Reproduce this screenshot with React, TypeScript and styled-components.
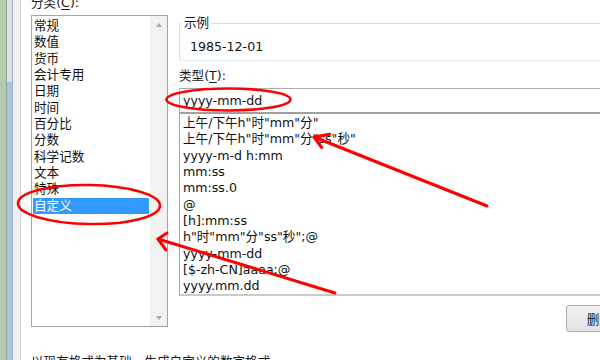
import React from 'react';
import styled, { createGlobalStyle } from 'styled-components';

const GlobalStyle = createGlobalStyle`
  html, body {
    margin: 0;
    padding: 0;
    overflow: hidden;
    background: #fff;
  }
  body {
    font-family: "DejaVu Sans", "Noto Sans CJK SC", sans-serif;
    font-size: 12.6px;
    color: #111;
  }
`;

const categories = ['常规', '数值', '货币', '会计专用', '日期', '时间', '百分比', '分数', '科学记数', '文本', '特殊', '自定义'];

const formats = [
	'上午/下午h"时"mm"分"',
	'上午/下午h"时"mm"分"ss"秒"',
	'yyyy-m-d h:mm',
	'mm:ss',
	'mm:ss.0',
	'@',
	'[h]:mm:ss',
	'h"时"mm"分"ss"秒";@',
	'yyyy-mm-dd',
	'[$-zh-CN]aaaa;@',
	'yyyy.mm.dd',
];

function Annotations() {
	return (
		<Overlay width={600} height={360} viewBox={'0 0 600 360'}>
			<g fill={'none'} stroke={'#f00'} strokeWidth={2.6} strokeLinecap={'round'} strokeLinejoin={'round'}>
				<ellipse cx={228.5} cy={99.5} rx={62} ry={11} />
				<ellipse cx={89} cy={204.5} rx={71} ry={19.5} transform={'rotate(1 89 204.5)'} />
				<path d={'M487 206 L314 137'} strokeWidth={3} />
				<path d={'M329.7 134.2 L314 137 L321.7 147.5'} strokeWidth={3} />
				<path d={'M335 293 L158 239'} strokeWidth={3} />
				<path d={'M167 233 L158 239 L166 250'} strokeWidth={3} />
			</g>
		</Overlay>
	);
}

export default function App() {
	return (
		<Page>
			<GlobalStyle />
			<WindowEdge />
			<Dialog>
				<Columns>
					<CategoryColumn>
						<FieldLabel>分类(<u>C</u>):</FieldLabel>
						<ListBox>
							<CategoryItems>
								{categories.map(x => (
									<CategoryItem key={x} selected={x === '自定义'}>{x}</CategoryItem>
								))}
							</CategoryItems>
							<ScrollTrack>
								<ScrollButton><Triangle dir={'up'} /></ScrollButton>
								<ScrollButton><Triangle dir={'down'} /></ScrollButton>
							</ScrollTrack>
						</ListBox>
					</CategoryColumn>
					<TypeColumn>
						<SampleGroup>
							<legend>示例</legend>
							<SampleValue>1985-12-01</SampleValue>
						</SampleGroup>
						<TypeLabel>类型(<u>T</u>):</TypeLabel>
						<TypeInput value={'yyyy-mm-dd'} readOnly />
						<TypeList>
							{formats.map(x => <TypeItem key={x}>{x}</TypeItem>)}
						</TypeList>
						<DeleteButton>删除(D)</DeleteButton>
					</TypeColumn>
				</Columns>
				<Hint>以现有格式为基础，生成自定义的数字格式。</Hint>
			</Dialog>
			<Annotations />
		</Page>
	);
}

const Page = styled.div`
	position: relative;
	display: flex;
	width: 652px;
	height: 360px;
	overflow: hidden;
`;

const WindowEdge = styled.div`
	flex: 0 0 21px;
	background:
		linear-gradient(to right, #b3cbb0 0 6px, #8fa58f 6px 7px, transparent 7px 12px, #9fb4c9 12px 13px, #f0f0f0 13px 20px, #d2d2d2 20px 21px),
		linear-gradient(to bottom, #dde3ea 0 82px, #a9c4e0 82px);
`;

const Dialog = styled.div`
	flex: 1;
	display: flex;
	flex-direction: column;
	margin-top: -5px;
	padding-left: 10px;
	background: #fff;
`;

const Columns = styled.div`
	display: flex;
	gap: 11px;
`;

const CategoryColumn = styled.div`
	flex: 0 0 137px;
	display: flex;
	flex-direction: column;
`;

const FieldLabel = styled.div`
	line-height: 16px;
	height: 16px;
	color: #1a1a1a;

	u {
		text-underline-offset: 2px;
	}
`;

const ListBox = styled.div`
	margin-top: 4px;
	height: 312px;
	box-sizing: border-box;
	border: 1px solid #a5a5a5;
	display: flex;
`;

const CategoryItems = styled.div`
	flex: 1;
	padding-top: 2px;
`;

const CategoryItem = styled.div<{ selected?: boolean }>`
	height: 16.33px;
	line-height: 16.33px;
	margin: 0 1px;
	padding-left: 1px;
	white-space: nowrap;
	background: ${p => (p.selected ? '#3399ff' : 'transparent')};
	color: ${p => (p.selected ? '#fff' : '#111')};
`;

const ScrollTrack = styled.div`
	flex: 0 0 17px;
	background: #f2f2f2;
	display: flex;
	flex-direction: column;
	justify-content: space-between;
`;

const ScrollButton = styled.div`
	height: 17px;
	display: flex;
	align-items: center;
	justify-content: center;
`;

const Triangle = styled.span<{ dir: 'up' | 'down' }>`
	width: 0;
	height: 0;
	border-left: 3.5px solid transparent;
	border-right: 3.5px solid transparent;
	${p => (p.dir === 'up' ? 'border-bottom: 4px solid #a8a8a8;' : 'border-top: 4px solid #a8a8a8;')}
`;

const TypeColumn = styled.div`
	flex: 1;
	display: flex;
	flex-direction: column;
`;

const SampleGroup = styled.fieldset`
	margin: 20px 0 0;
	min-width: 0;
	padding: 8px 10px 5px 10px;
	border: 1px solid #dcdcdc;
	border-bottom-color: #e3e9ef;
	border-radius: 3px;

	legend {
		margin-left: -8px;
		padding: 0 2px;
		line-height: 16px;
		color: #1a1a1a;
	}
`;

const SampleValue = styled.div`
	line-height: 16px;
	height: 16px;
`;

const TypeLabel = styled(FieldLabel)`
	margin-top: 7px;
`;

const TypeInput = styled.input`
	margin-top: 4px;
	height: 25px;
	box-sizing: border-box;
	border: 1px solid #abadb3;
	border-bottom-color: #a0a0a0;
	padding: 0 3px;
	font: inherit;
	color: #111;
	background: #fff;
	outline: none;
`;

const TypeList = styled.div`
	height: 183px;
	box-sizing: border-box;
	border: 1px solid #a5a5a5;
	border-top-color: #a0a0a0;
	border-bottom: 2px solid #cacaca;
	padding-top: 1px;
	overflow: hidden;
`;

const TypeItem = styled.div`
	height: 16.33px;
	line-height: 16.33px;
	padding-left: 3px;
	white-space: nowrap;
`;

const DeleteButton = styled.button`
	align-self: flex-end;
	margin-top: 9px;
	width: 86px;
	height: 27px;
	border: 1px solid #acacac;
	border-radius: 3px;
	background: linear-gradient(to bottom, #f2f2f2, #e2e2e2);
	font: inherit;
	color: #111;
	padding: 0;
`;

const Hint = styled.div`
	margin-top: 22px;
	line-height: 16px;
	color: #1a1a1a;
`;

const Overlay = styled.svg`
	position: absolute;
	left: 0;
	top: 0;
	pointer-events: none;
`;
